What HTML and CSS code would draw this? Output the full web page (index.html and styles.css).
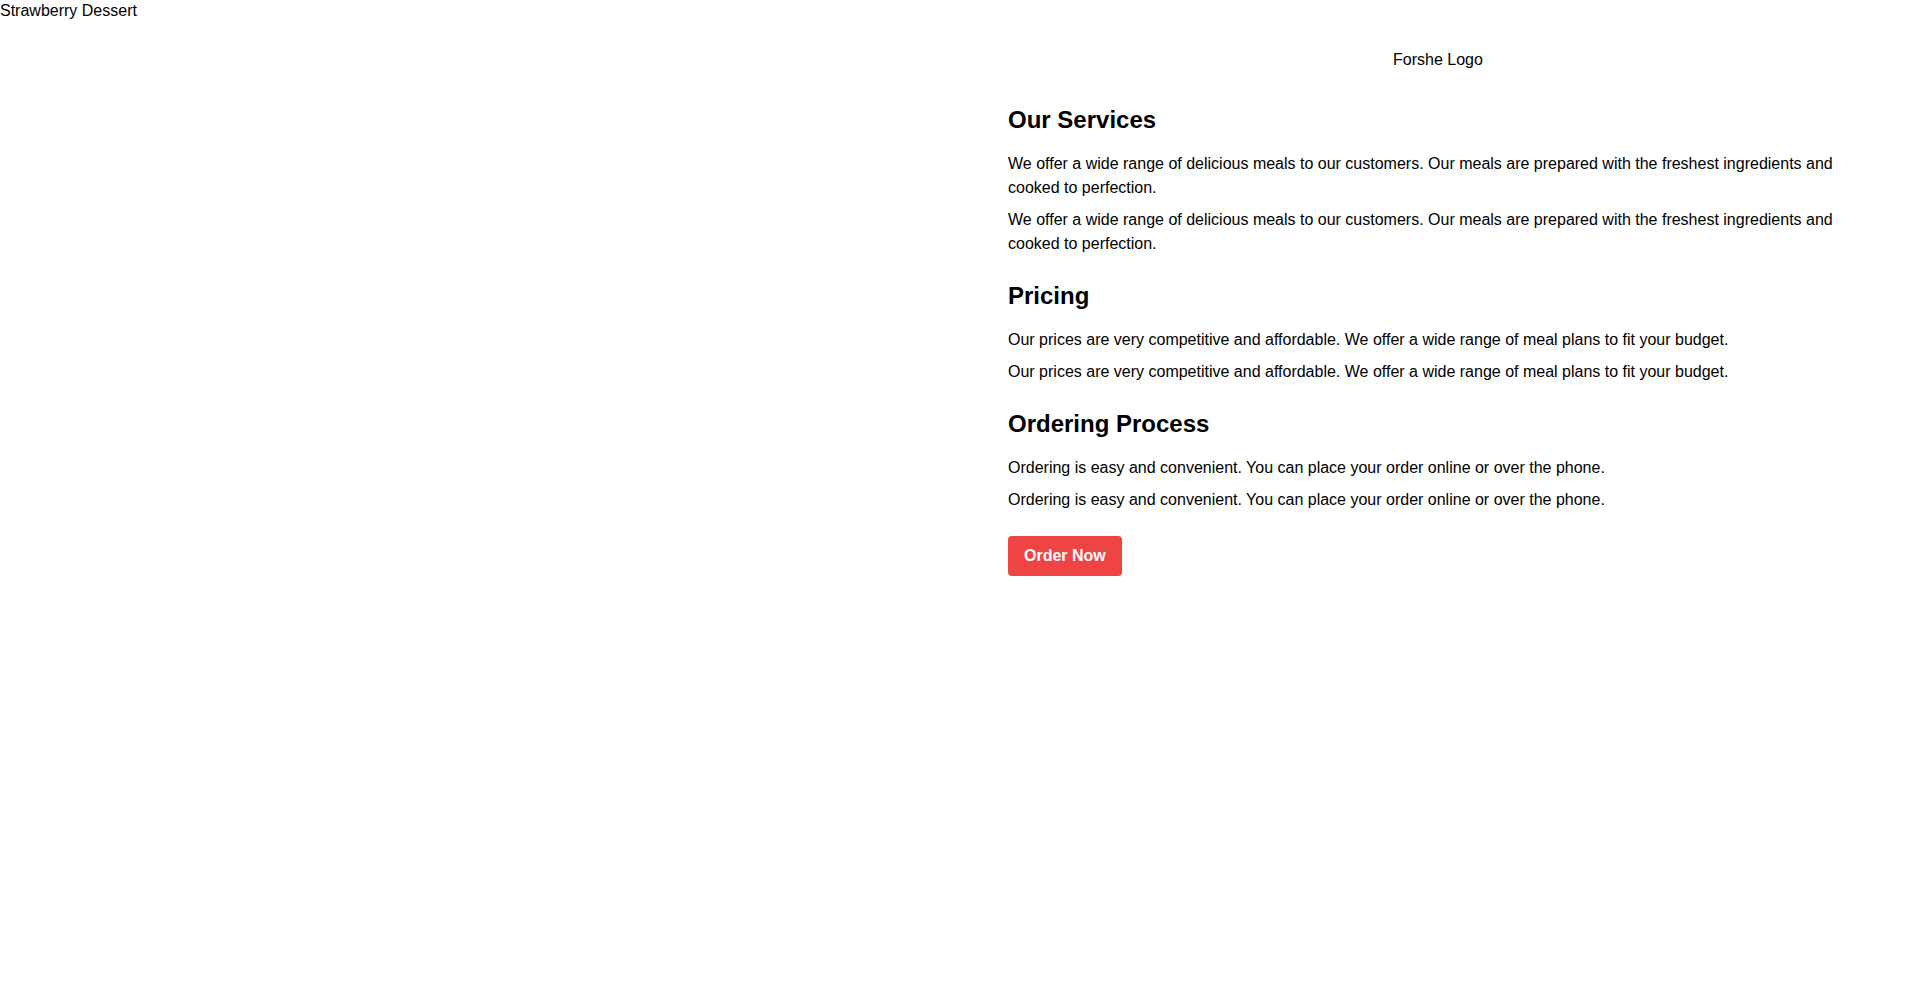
FILE: index.html
```html
<!DOCTYPE html>
<html lang="en">
<head>
<meta charset="utf-8">
<title>Forshe</title>
<link rel="stylesheet" href="styles.css">
</head>
<body>
<div class="page">
  <div class="media">
    <span class="alt">Strawberry Dessert</span>
  </div>
  <div class="content">
    <div class="logo"><span class="logo-box">Forshe Logo</span></div>
    <section class="section">
      <h2>Our Services</h2>
      <p>We offer a wide range of delicious meals to our customers. Our meals are prepared with the freshest ingredients and cooked to perfection.</p>
      <p>We offer a wide range of delicious meals to our customers. Our meals are prepared with the freshest ingredients and cooked to perfection.</p>
    </section>
    <section class="section">
      <h2>Pricing</h2>
      <p>Our prices are very competitive and affordable. We offer a wide range of meal plans to fit your budget.</p>
      <p>Our prices are very competitive and affordable. We offer a wide range of meal plans to fit your budget.</p>
    </section>
    <section class="section">
      <h2>Ordering Process</h2>
      <p>Ordering is easy and convenient. You can place your order online or over the phone.</p>
      <p>Ordering is easy and convenient. You can place your order online or over the phone.</p>
    </section>
    <button class="btn">Order Now</button>
  </div>
</div>
</body>
</html>
```

FILE: styles.css
```css
* { box-sizing: border-box; }
html, body {
  margin: 0;
  padding: 0;
  background: #fff;
  color: #000;
  font-family: "Liberation Sans", Arial, sans-serif;
  font-size: 16px;
  line-height: 1.5;
}
.page {
  display: flex;
  min-height: 995px;
}
.media {
  width: 50%;
  line-height: 22px;
}
.alt { display: inline-block; }
.content {
  width: 50%;
  padding: 48px;
}
.logo {
  display: flex;
  justify-content: center;
  line-height: 24px;
  margin-bottom: 32px;
}
.logo-box {
  display: block;
  width: 96px;
  padding-left: 1px;
  white-space: nowrap;
}
.section { margin-bottom: 24px; }
.section h2 {
  margin: 0 0 16px;
  font-size: 24px;
  line-height: 32px;
  font-weight: 700;
}
.section p {
  margin: 0 0 8px;
  line-height: 24px;
}
.btn {
  display: inline-block;
  background: #ef4444;
  color: #fff;
  border: 0;
  border-radius: 4px;
  padding: 8px 16px;
  font-family: inherit;
  font-size: 16px;
  line-height: 24px;
  font-weight: 700;
  cursor: pointer;
}
```
